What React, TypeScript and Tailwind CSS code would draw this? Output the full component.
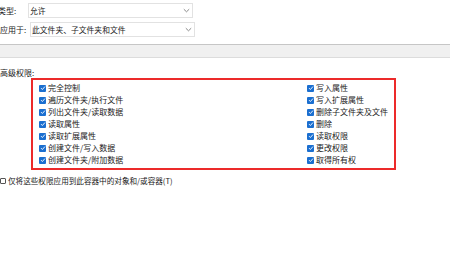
import React from 'react';

const leftPerms = [
  '完全控制',
  '遍历文件夹/执行文件',
  '列出文件夹/读取数据',
  '读取属性',
  '读取扩展属性',
  '创建文件/写入数据',
  '创建文件夹/附加数据',
];

const rightPerms = [
  '写入属性',
  '写入扩展属性',
  '删除子文件夹及文件',
  '删除',
  '读取权限',
  '更改权限',
  '取得所有权',
];

const Chevron = () => (
  <svg width="7" height="5" viewBox="0 0 7 5" className="mr-[2px]">
    <path d="M0.8 1.2 L3.5 3.8 L6.2 1.2" fill="none" stroke="#7a7a7a" strokeWidth="0.9" />
  </svg>
);

const Checked = () => (
  <span className="flex items-center justify-center w-[7px] h-[7px] rounded-[1px] bg-[#1b6fd0] shrink-0">
    <svg width="6" height="6" viewBox="0 0 6 6">
      <path d="M1 3.1 L2.4 4.5 L5 1.5" fill="none" stroke="#fff" strokeWidth="0.9" />
    </svg>
  </span>
);

const Dropdown = ({ value }: { value: string }) => (
  <div className="flex items-center justify-between w-[165px] h-[15px] border border-[#e2e2e2] pl-[1px]">
    <span className="text-[7.8px]">{value}</span>
    <Chevron />
  </div>
);

const PermRow = ({ label }: { label: string }) => (
  <div className="flex items-center gap-[2px] h-[12px]">
    <Checked />
    <span>{label}</span>
  </div>
);

export default function App() {
  return (
    <div
      className="w-[450px] h-[260px] bg-white text-[#1a1a1a] text-[8px] leading-none overflow-hidden"
      style={{ fontFamily: '"Noto Sans CJK SC", "Noto Sans", sans-serif' }}
    >
      <div className="flex items-center pt-[3px]">
        <span className="w-[30px] -ml-[2px] pr-[2px]">类型:</span>
        <Dropdown value="允许" />
      </div>
      <div className="flex items-center mt-[4px]">
        <span className="w-[30px]">应用于:</span>
        <Dropdown value="此文件夹、子文件夹和文件" />
      </div>

      <div className="mt-[7px] h-[14px] bg-[#f0f0f0] border-t border-[#c6c6c6] border-b border-b-[#dcdcdc]" />

      <div className="mt-[10px] h-[9px] flex items-center">高级权限:</div>

      <div className="ml-[31px] mt-[1px] w-[365px] h-[92px] border-2 border-[#ec2a2a] pl-[6px] py-[2px] grid grid-cols-[268px_1fr]">
        <div className="flex flex-col">
          {leftPerms.map((p) => (
            <PermRow key={p} label={p} />
          ))}
        </div>
        <div className="flex flex-col">
          {rightPerms.map((p) => (
            <PermRow key={p} label={p} />
          ))}
        </div>
      </div>

      <div className="flex items-center gap-[2px] mt-[7px]">
        <span className="w-[6px] h-[6px] border border-[#555] rounded-[1px] bg-white shrink-0" />
        <span className="text-[7.6px]">仅将这些权限应用到此容器中的对象和/或容器(T)</span>
      </div>
    </div>
  );
}
